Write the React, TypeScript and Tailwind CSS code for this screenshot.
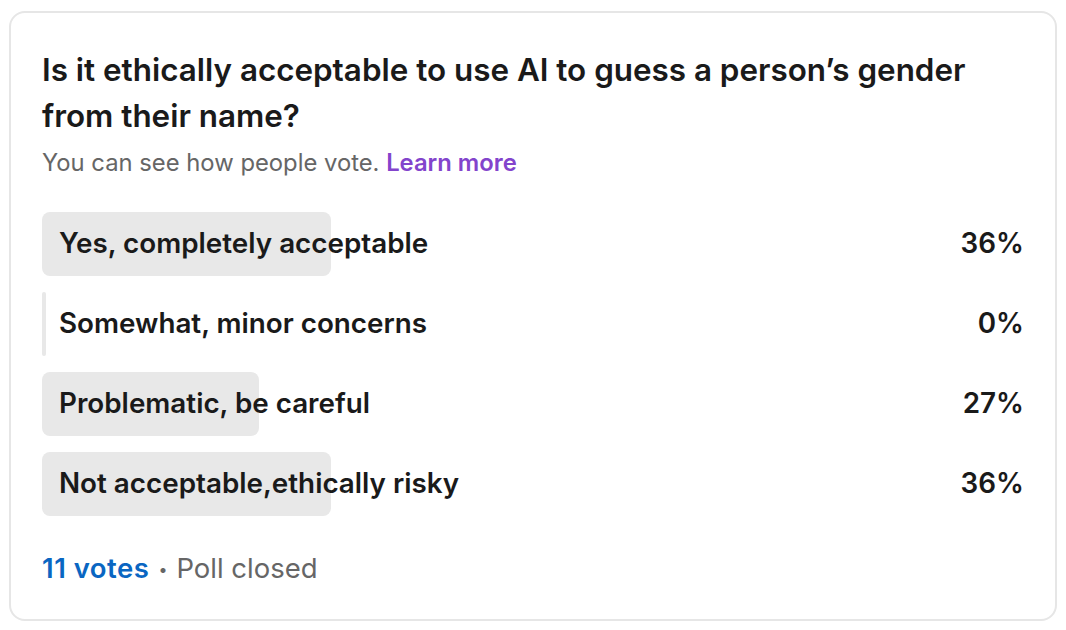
import React from 'react';

const options = [
  { label: 'Yes, completely acceptable', pct: 36, bar: 289 },
  { label: 'Somewhat, minor concerns', pct: 0, bar: 4 },
  { label: 'Problematic, be careful', pct: 27, bar: 217 },
  { label: 'Not acceptable,ethically risky', pct: 36, bar: 289 },
];

export default function App() {
  return (
    <div className="w-[1066px] h-[630px] bg-white p-[9px] pt-[11px] font-['Inter',sans-serif]">
      <div className="h-[610px] w-[1048px] rounded-[16px] border-2 border-[#e6e6e6] px-[31px] pt-[34px]">
        <h1 className="text-[31.4px] leading-[46px] font-semibold text-[#1a1a1a]">
          Is it ethically acceptable to use AI to guess a person’s gender from their name?
        </h1>
        <p className="mt-[9px] text-[23.8px] leading-[30px] text-[#666666]">
          You can see how people vote. <span className="font-semibold text-[#8344cc]">Learn more</span>
        </p>
        <div className="mt-[34px] flex flex-col gap-[16px]">
          {options.map((o) => (
            <div key={o.label} className="relative flex h-[64px] items-center justify-between">
              <div className="absolute left-0 top-0 h-full bg-[#e8e8e8]" style={{ width: o.bar, borderRadius: o.bar < 10 ? 3 : 8 }} />
              <span className="relative pl-[17px] text-[27.8px] font-semibold text-[#1a1a1a]">{o.label}</span>
              <span className="relative text-[27.8px] font-semibold text-[#1a1a1a]">{o.pct}%</span>
            </div>
          ))}
        </div>
        <div className="mt-[35px] flex h-[36px] items-center text-[27.5px]">
          <span className="font-semibold text-[#0a66c2] tracking-[0.5px]">11 votes</span>
          <span className="mx-[9px] text-[16px] text-[#666666]">•</span>
          <span className="text-[#666666]">Poll closed</span>
        </div>
      </div>
    </div>
  );
}
